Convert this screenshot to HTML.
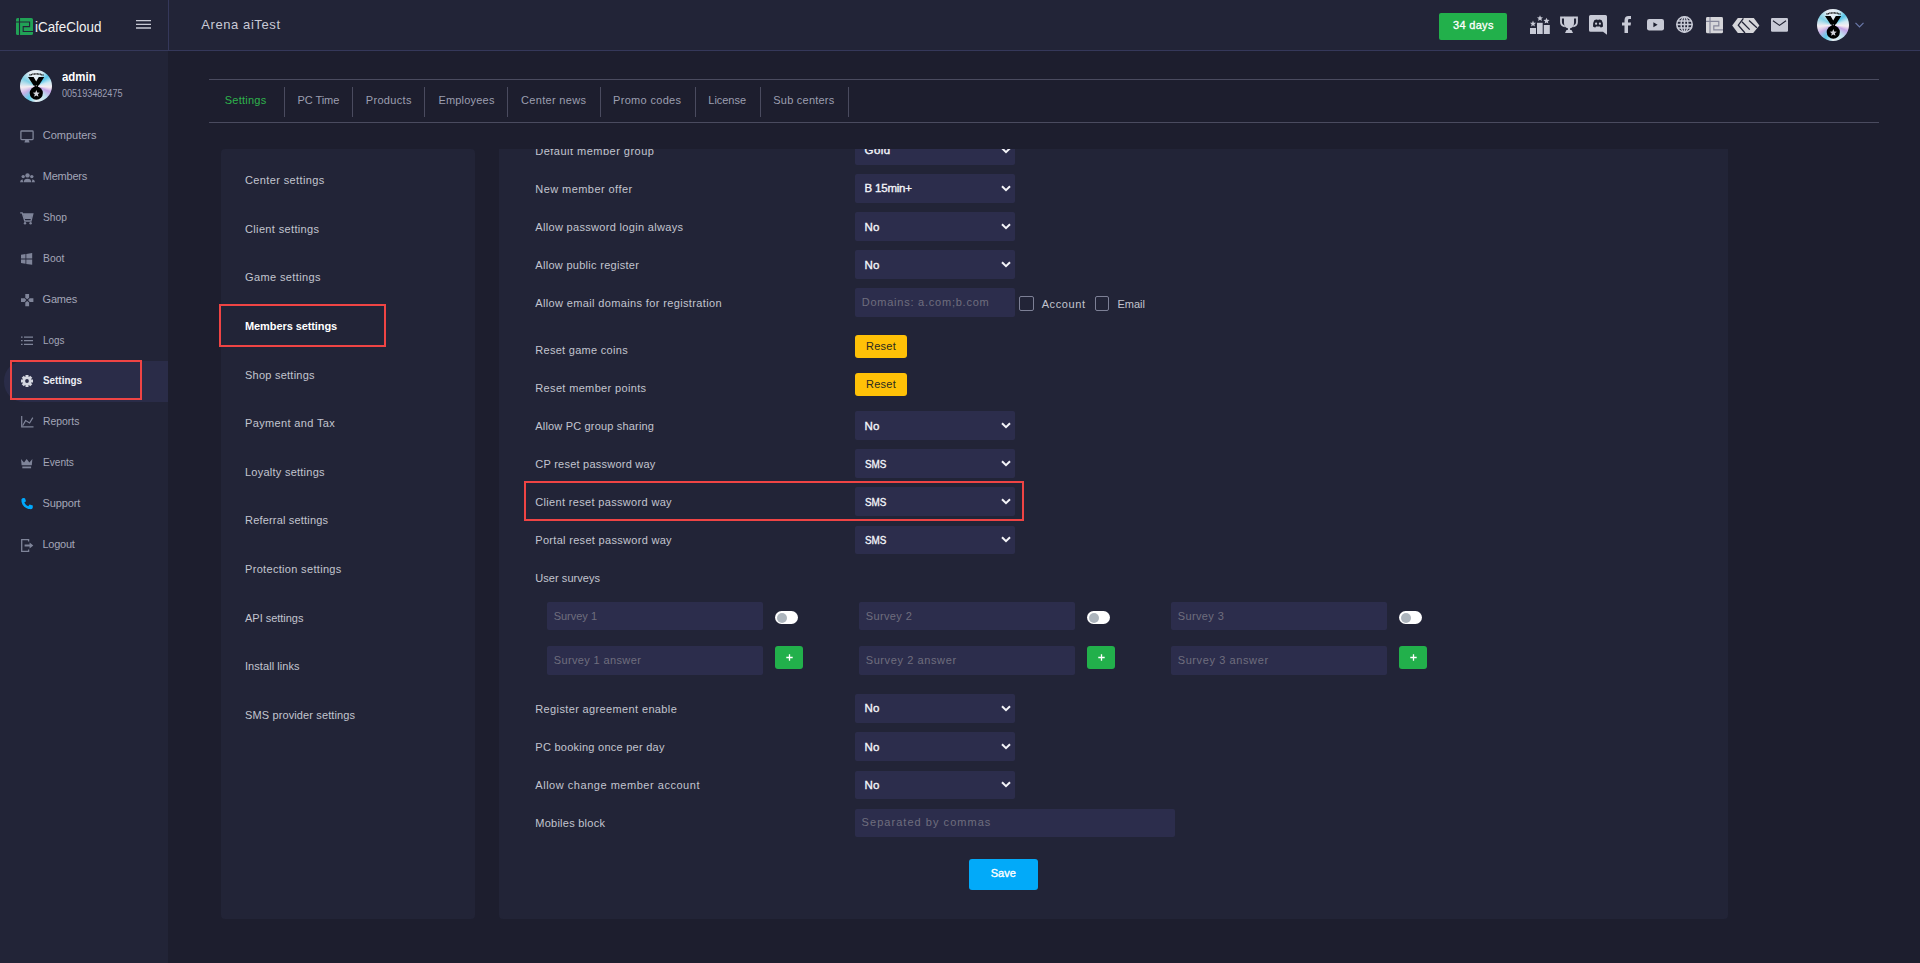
<!DOCTYPE html>
<html><head><meta charset="utf-8"><title>iCafeCloud</title>
<style>
html,body{margin:0;padding:0;}
body{width:1920px;height:963px;overflow:hidden;background:#1d1e2e;position:relative;font-family:"Liberation Sans",sans-serif;}
.t{position:absolute;white-space:nowrap;line-height:1;}
.b{position:absolute;}
svg{position:absolute;overflow:visible;}
#rp{position:absolute;left:499px;top:149px;width:1229px;height:770px;overflow:hidden;background:#222437;border-radius:0 0 4px 4px;}
#rpi{position:absolute;left:-499px;top:-149px;width:1920px;height:963px;}
</style></head><body>
<div class="b" style="left:0px;top:0px;width:1920px;height:50px;background:#222437;border-bottom:1px solid #35385a"></div>
<div class="b" style="left:168px;top:0px;width:1px;height:50px;background:#35385a"></div>
<div class="b" style="left:0px;top:51px;width:168px;height:912px;background:#222437"></div>
<div class="t" style="left:201.20px;top:18.00px;font-size:13px;color:#c9cad6;letter-spacing:0.595px">Arena aiTest</div>
<div class="b" style="left:1439px;top:13px;width:68px;height:27px;background:#22b04b;border-radius:2px"></div>
<div class="t" style="left:1453.00px;top:19.89px;font-size:11px;color:#ffffff;letter-spacing:0.317px;-webkit-text-stroke:0.3px #ffffff">34 days</div>
<div class="t" style="left:35.40px;top:18.88px;font-size:15.5px;color:#f2f2f2;transform:scaleX(0.8653);transform-origin:0 0">iCafeCloud</div>
<div class="b" style="left:4px;top:361px;width:164px;height:41px;background:#2a2c48;border-radius:20px 0 0 20px"></div>
<div class="b" style="left:10px;top:360px;width:132px;height:40px;border:2px solid #ef4444;box-sizing:border-box"></div>
<div class="t" style="left:61.70px;top:70.84px;font-size:12px;color:#ffffff;transform:scaleX(0.9527);transform-origin:0 0;font-weight:bold">admin</div>
<div class="t" style="left:61.70px;top:88.53px;font-size:10px;color:#9c9eb3;transform:scaleX(0.9064);transform-origin:0 0">005193482475</div>
<div class="t" style="left:42.80px;top:129.89px;font-size:11px;color:#a4a6b8;letter-spacing:-0.019px">Computers</div>
<div class="t" style="left:42.80px;top:170.89px;font-size:11px;color:#a4a6b8;letter-spacing:-0.229px">Members</div>
<div class="t" style="left:42.80px;top:211.89px;font-size:11px;color:#a4a6b8;transform:scaleX(0.9282);transform-origin:0 0">Shop</div>
<div class="t" style="left:42.60px;top:252.89px;font-size:11px;color:#a4a6b8;transform:scaleX(0.9414);transform-origin:0 0">Boot</div>
<div class="t" style="left:42.60px;top:293.89px;font-size:11px;color:#a4a6b8;letter-spacing:-0.225px">Games</div>
<div class="t" style="left:42.60px;top:334.89px;font-size:11px;color:#a4a6b8;transform:scaleX(0.9005);transform-origin:0 0">Logs</div>
<div class="t" style="left:42.60px;top:415.89px;font-size:11px;color:#a4a6b8;transform:scaleX(0.9455);transform-origin:0 0">Reports</div>
<div class="t" style="left:42.60px;top:456.89px;font-size:11px;color:#a4a6b8;transform:scaleX(0.9190);transform-origin:0 0">Events</div>
<div class="t" style="left:42.60px;top:497.89px;font-size:11px;color:#a4a6b8;letter-spacing:-0.133px">Support</div>
<div class="t" style="left:42.40px;top:538.89px;font-size:11px;color:#a4a6b8;letter-spacing:-0.245px">Logout</div>
<div class="t" style="left:42.70px;top:374.89px;font-size:11px;color:#eceef5;transform:scaleX(0.8968);transform-origin:0 0;font-weight:bold">Settings</div>
<div class="b" style="left:209px;top:79px;width:1670px;height:1px;background:#4a4b5f"></div>
<div class="b" style="left:209px;top:122px;width:1670px;height:1px;background:#4a4b5f"></div>
<div class="b" style="left:284px;top:87px;width:1px;height:30px;background:#4a4b5f"></div>
<div class="b" style="left:352px;top:87px;width:1px;height:30px;background:#4a4b5f"></div>
<div class="b" style="left:424px;top:87px;width:1px;height:30px;background:#4a4b5f"></div>
<div class="b" style="left:507px;top:87px;width:1px;height:30px;background:#4a4b5f"></div>
<div class="b" style="left:600px;top:87px;width:1px;height:30px;background:#4a4b5f"></div>
<div class="b" style="left:695px;top:87px;width:1px;height:30px;background:#4a4b5f"></div>
<div class="b" style="left:760px;top:87px;width:1px;height:30px;background:#4a4b5f"></div>
<div class="b" style="left:848px;top:87px;width:1px;height:30px;background:#4a4b5f"></div>
<div class="t" style="left:224.70px;top:94.89px;font-size:11px;color:#2eb34c;letter-spacing:0.257px">Settings</div>
<div class="t" style="left:297.50px;top:94.89px;font-size:11px;color:#9c9eb0;letter-spacing:-0.071px">PC Time</div>
<div class="t" style="left:365.80px;top:94.89px;font-size:11px;color:#9c9eb0;letter-spacing:0.318px">Products</div>
<div class="t" style="left:438.40px;top:94.89px;font-size:11px;color:#9c9eb0;letter-spacing:0.203px">Employees</div>
<div class="t" style="left:521.00px;top:94.89px;font-size:11px;color:#9c9eb0;letter-spacing:0.325px">Center news</div>
<div class="t" style="left:613.00px;top:94.89px;font-size:11px;color:#9c9eb0;letter-spacing:0.325px">Promo codes</div>
<div class="t" style="left:708.30px;top:94.89px;font-size:11px;color:#9c9eb0;letter-spacing:-0.029px">License</div>
<div class="t" style="left:773.30px;top:94.89px;font-size:11px;color:#9c9eb0;letter-spacing:0.225px">Sub centers</div>
<div class="b" style="left:221px;top:149px;width:254px;height:770px;background:#222437;border-radius:4px"></div>
<div class="t" style="left:245.00px;top:174.89px;font-size:11px;color:#c3c4cf;letter-spacing:0.379px">Center settings</div>
<div class="t" style="left:245.00px;top:223.89px;font-size:11px;color:#c3c4cf;letter-spacing:0.354px">Client settings</div>
<div class="t" style="left:245.00px;top:271.89px;font-size:11px;color:#c3c4cf;letter-spacing:0.385px">Game settings</div>
<div class="t" style="left:245.00px;top:320.89px;font-size:11px;color:#ffffff;letter-spacing:-0.087px;font-weight:bold">Members settings</div>
<div class="t" style="left:245.00px;top:369.89px;font-size:11px;color:#c3c4cf;letter-spacing:0.240px">Shop settings</div>
<div class="t" style="left:245.00px;top:417.89px;font-size:11px;color:#c3c4cf;letter-spacing:0.361px">Payment and Tax</div>
<div class="t" style="left:245.00px;top:466.89px;font-size:11px;color:#c3c4cf;letter-spacing:0.248px">Loyalty settings</div>
<div class="t" style="left:245.00px;top:514.89px;font-size:11px;color:#c3c4cf;letter-spacing:0.186px">Referral settings</div>
<div class="t" style="left:245.00px;top:563.89px;font-size:11px;color:#c3c4cf;letter-spacing:0.322px">Protection settings</div>
<div class="t" style="left:245.00px;top:612.89px;font-size:11px;color:#c3c4cf;letter-spacing:-0.023px">API settings</div>
<div class="t" style="left:245.00px;top:660.89px;font-size:11px;color:#c3c4cf;letter-spacing:0.062px">Install links</div>
<div class="t" style="left:245.00px;top:709.89px;font-size:11px;color:#c3c4cf;letter-spacing:0.124px">SMS provider settings</div>
<div class="b" style="left:219px;top:304px;width:167px;height:43px;border:2px solid #ef4444;box-sizing:border-box"></div>
<div id="rp"><div id="rpi">
<div class="t" style="left:535.30px;top:145.69px;font-size:11px;color:#c3c4cf;letter-spacing:0.484px">Default member group</div>
<div class="t" style="left:535.30px;top:183.99px;font-size:11px;color:#c3c4cf;letter-spacing:0.437px">New member offer</div>
<div class="t" style="left:535.30px;top:221.89px;font-size:11px;color:#c3c4cf;letter-spacing:0.320px">Allow password login always</div>
<div class="t" style="left:535.30px;top:259.69px;font-size:11px;color:#c3c4cf;letter-spacing:0.291px">Allow public register</div>
<div class="t" style="left:535.30px;top:297.59px;font-size:11px;color:#c3c4cf;letter-spacing:0.362px">Allow email domains for registration</div>
<div class="t" style="left:535.30px;top:344.99px;font-size:11px;color:#c3c4cf;letter-spacing:0.287px">Reset game coins</div>
<div class="t" style="left:535.30px;top:382.69px;font-size:11px;color:#c3c4cf;letter-spacing:0.344px">Reset member points</div>
<div class="t" style="left:535.30px;top:421.09px;font-size:11px;color:#c3c4cf;letter-spacing:0.176px">Allow PC group sharing</div>
<div class="t" style="left:535.30px;top:458.89px;font-size:11px;color:#c3c4cf;letter-spacing:0.236px">CP reset password way</div>
<div class="t" style="left:535.30px;top:496.89px;font-size:11px;color:#c3c4cf;letter-spacing:0.330px">Client reset password way</div>
<div class="t" style="left:535.30px;top:534.89px;font-size:11px;color:#c3c4cf;letter-spacing:0.304px">Portal reset password way</div>
<div class="t" style="left:535.30px;top:572.89px;font-size:11px;color:#c3c4cf;letter-spacing:0.052px">User surveys</div>
<div class="t" style="left:535.30px;top:704.19px;font-size:11px;color:#c3c4cf;letter-spacing:0.365px">Register agreement enable</div>
<div class="t" style="left:535.30px;top:741.99px;font-size:11px;color:#c3c4cf;letter-spacing:0.255px">PC booking once per day</div>
<div class="t" style="left:535.30px;top:779.89px;font-size:11px;color:#c3c4cf;letter-spacing:0.528px">Allow change member account</div>
<div class="t" style="left:535.30px;top:817.69px;font-size:11px;color:#c3c4cf;letter-spacing:0.246px">Mobiles block</div>
<div class="b" style="left:855px;top:136px;width:160px;height:28.8px;background:#2c2d4c;border-radius:2px"></div>
<svg class="chev" width="10" height="7" viewBox="0 0 10 7" style="left:1001px;top:146.8px"><path d="M1 1.2 L5 5.2 L9 1.2" fill="none" stroke="#f4f4f8" stroke-width="2"/></svg>
<div class="t" style="left:864.60px;top:145.47px;font-size:11.5px;color:#f4f5fa;letter-spacing:0.450px;-webkit-text-stroke:0.35px #f4f5fa">Gold</div>
<div class="b" style="left:855px;top:174px;width:160px;height:28.8px;background:#2c2d4c;border-radius:2px"></div>
<svg class="chev" width="10" height="7" viewBox="0 0 10 7" style="left:1001px;top:184.8px"><path d="M1 1.2 L5 5.2 L9 1.2" fill="none" stroke="#f4f4f8" stroke-width="2"/></svg>
<div class="t" style="left:864.60px;top:183.47px;font-size:11.5px;color:#f4f5fa;letter-spacing:-0.211px;-webkit-text-stroke:0.35px #f4f5fa">B 15min+</div>
<div class="b" style="left:855px;top:212.2px;width:160px;height:28.8px;background:#2c2d4c;border-radius:2px"></div>
<svg class="chev" width="10" height="7" viewBox="0 0 10 7" style="left:1001px;top:223.0px"><path d="M1 1.2 L5 5.2 L9 1.2" fill="none" stroke="#f4f4f8" stroke-width="2"/></svg>
<div class="t" style="left:864.60px;top:221.67px;font-size:11.5px;color:#f4f5fa;letter-spacing:0.050px;-webkit-text-stroke:0.35px #f4f5fa">No</div>
<div class="b" style="left:855px;top:250.2px;width:160px;height:28.8px;background:#2c2d4c;border-radius:2px"></div>
<svg class="chev" width="10" height="7" viewBox="0 0 10 7" style="left:1001px;top:261.0px"><path d="M1 1.2 L5 5.2 L9 1.2" fill="none" stroke="#f4f4f8" stroke-width="2"/></svg>
<div class="t" style="left:864.60px;top:259.67px;font-size:11.5px;color:#f4f5fa;letter-spacing:0.050px;-webkit-text-stroke:0.35px #f4f5fa">No</div>
<div class="b" style="left:855px;top:411.2px;width:160px;height:28.8px;background:#2c2d4c;border-radius:2px"></div>
<svg class="chev" width="10" height="7" viewBox="0 0 10 7" style="left:1001px;top:422.0px"><path d="M1 1.2 L5 5.2 L9 1.2" fill="none" stroke="#f4f4f8" stroke-width="2"/></svg>
<div class="t" style="left:864.60px;top:420.67px;font-size:11.5px;color:#f4f5fa;letter-spacing:0.050px;-webkit-text-stroke:0.35px #f4f5fa">No</div>
<div class="b" style="left:855px;top:449.2px;width:160px;height:28.8px;background:#2c2d4c;border-radius:2px"></div>
<svg class="chev" width="10" height="7" viewBox="0 0 10 7" style="left:1001px;top:460.0px"><path d="M1 1.2 L5 5.2 L9 1.2" fill="none" stroke="#f4f4f8" stroke-width="2"/></svg>
<div class="t" style="left:864.60px;top:458.67px;font-size:11.5px;color:#f4f5fa;transform:scaleX(0.8603);transform-origin:0 0;-webkit-text-stroke:0.35px #f4f5fa">SMS</div>
<div class="b" style="left:855px;top:487.4px;width:160px;height:28.8px;background:#2c2d4c;border-radius:2px"></div>
<svg class="chev" width="10" height="7" viewBox="0 0 10 7" style="left:1001px;top:498.2px"><path d="M1 1.2 L5 5.2 L9 1.2" fill="none" stroke="#f4f4f8" stroke-width="2"/></svg>
<div class="t" style="left:864.60px;top:496.87px;font-size:11.5px;color:#f4f5fa;transform:scaleX(0.8603);transform-origin:0 0;-webkit-text-stroke:0.35px #f4f5fa">SMS</div>
<div class="b" style="left:855px;top:525.6px;width:160px;height:28.8px;background:#2c2d4c;border-radius:2px"></div>
<svg class="chev" width="10" height="7" viewBox="0 0 10 7" style="left:1001px;top:536.4px"><path d="M1 1.2 L5 5.2 L9 1.2" fill="none" stroke="#f4f4f8" stroke-width="2"/></svg>
<div class="t" style="left:864.60px;top:535.07px;font-size:11.5px;color:#f4f5fa;transform:scaleX(0.8603);transform-origin:0 0;-webkit-text-stroke:0.35px #f4f5fa">SMS</div>
<div class="b" style="left:855px;top:694px;width:160px;height:28.8px;background:#2c2d4c;border-radius:2px"></div>
<svg class="chev" width="10" height="7" viewBox="0 0 10 7" style="left:1001px;top:704.8px"><path d="M1 1.2 L5 5.2 L9 1.2" fill="none" stroke="#f4f4f8" stroke-width="2"/></svg>
<div class="t" style="left:864.60px;top:703.47px;font-size:11.5px;color:#f4f5fa;letter-spacing:0.050px;-webkit-text-stroke:0.35px #f4f5fa">No</div>
<div class="b" style="left:855px;top:732.2px;width:160px;height:28.8px;background:#2c2d4c;border-radius:2px"></div>
<svg class="chev" width="10" height="7" viewBox="0 0 10 7" style="left:1001px;top:743.0px"><path d="M1 1.2 L5 5.2 L9 1.2" fill="none" stroke="#f4f4f8" stroke-width="2"/></svg>
<div class="t" style="left:864.60px;top:741.67px;font-size:11.5px;color:#f4f5fa;letter-spacing:0.050px;-webkit-text-stroke:0.35px #f4f5fa">No</div>
<div class="b" style="left:855px;top:770.6px;width:160px;height:28.8px;background:#2c2d4c;border-radius:2px"></div>
<svg class="chev" width="10" height="7" viewBox="0 0 10 7" style="left:1001px;top:781.4px"><path d="M1 1.2 L5 5.2 L9 1.2" fill="none" stroke="#f4f4f8" stroke-width="2"/></svg>
<div class="t" style="left:864.60px;top:780.07px;font-size:11.5px;color:#f4f5fa;letter-spacing:0.050px;-webkit-text-stroke:0.35px #f4f5fa">No</div>
<div class="b" style="left:855px;top:288px;width:160px;height:29px;background:#2c2d4c;border-radius:2px"></div>
<div class="t" style="left:861.70px;top:296.89px;font-size:11px;color:#6f6e7e;letter-spacing:0.768px">Domains: a.com;b.com</div>
<div class="b" style="left:1019px;top:296px;width:15px;height:15px;border:1px solid #7d8096;border-radius:2px;box-sizing:border-box"></div>
<div class="t" style="left:1041.70px;top:298.99px;font-size:11px;color:#c3c4cf;letter-spacing:0.592px">Account</div>
<div class="b" style="left:1095px;top:296px;width:14px;height:15px;border:1px solid #7d8096;border-radius:2px;box-sizing:border-box"></div>
<div class="t" style="left:1117.50px;top:298.99px;font-size:11px;color:#c3c4cf;letter-spacing:0.000px">Email</div>
<div class="b" style="left:855px;top:335px;width:52px;height:23px;background:#ffc107;border-radius:3px"></div>
<div class="t" style="left:866.00px;top:340.69px;font-size:11px;color:#2a2a20;letter-spacing:0.262px">Reset</div>
<div class="b" style="left:855px;top:373px;width:52px;height:23px;background:#ffc107;border-radius:3px"></div>
<div class="t" style="left:866.00px;top:378.69px;font-size:11px;color:#2a2a20;letter-spacing:0.262px">Reset</div>
<div class="b" style="left:547px;top:602px;width:216px;height:28px;background:#2c2d4c;border-radius:2px"></div>
<div class="b" style="left:547px;top:646px;width:216px;height:29px;background:#2c2d4c;border-radius:2px"></div>
<div class="t" style="left:553.70px;top:610.99px;font-size:11px;color:#6f6e7e;letter-spacing:-0.011px">Survey 1</div>
<div class="t" style="left:553.70px;top:654.89px;font-size:11px;color:#6f6e7e;letter-spacing:0.373px">Survey 1 answer</div>
<div class="b" style="left:775px;top:611px;width:23px;height:13px;background:#ffffff;border-radius:7px"></div>
<div class="b" style="left:776.5px;top:612.5px;width:10px;height:10px;background:#adb5bd;border-radius:5px"></div>
<div class="b" style="left:775px;top:646px;width:28px;height:23px;background:#22b04b;border-radius:3px"></div>
<svg class="chev" width="7" height="7" viewBox="0 0 7 7" style="left:785.8px;top:654px"><path d="M3.5 0.3V6.7M0.3 3.5H6.7" stroke="#ffffff" stroke-width="1.3"/></svg>
<div class="b" style="left:859px;top:602px;width:216px;height:28px;background:#2c2d4c;border-radius:2px"></div>
<div class="b" style="left:859px;top:646px;width:216px;height:29px;background:#2c2d4c;border-radius:2px"></div>
<div class="t" style="left:865.70px;top:610.99px;font-size:11px;color:#6f6e7e;letter-spacing:0.389px">Survey 2</div>
<div class="t" style="left:865.70px;top:654.89px;font-size:11px;color:#6f6e7e;letter-spacing:0.602px">Survey 2 answer</div>
<div class="b" style="left:1087px;top:611px;width:23px;height:13px;background:#ffffff;border-radius:7px"></div>
<div class="b" style="left:1088.5px;top:612.5px;width:10px;height:10px;background:#adb5bd;border-radius:5px"></div>
<div class="b" style="left:1087px;top:646px;width:28px;height:23px;background:#22b04b;border-radius:3px"></div>
<svg class="chev" width="7" height="7" viewBox="0 0 7 7" style="left:1097.8px;top:654px"><path d="M3.5 0.3V6.7M0.3 3.5H6.7" stroke="#ffffff" stroke-width="1.3"/></svg>
<div class="b" style="left:1171px;top:602px;width:216px;height:28px;background:#2c2d4c;border-radius:2px"></div>
<div class="b" style="left:1171px;top:646px;width:216px;height:29px;background:#2c2d4c;border-radius:2px"></div>
<div class="t" style="left:1177.70px;top:610.99px;font-size:11px;color:#6f6e7e;letter-spacing:0.389px">Survey 3</div>
<div class="t" style="left:1177.70px;top:654.89px;font-size:11px;color:#6f6e7e;letter-spacing:0.602px">Survey 3 answer</div>
<div class="b" style="left:1399px;top:611px;width:23px;height:13px;background:#ffffff;border-radius:7px"></div>
<div class="b" style="left:1400.5px;top:612.5px;width:10px;height:10px;background:#adb5bd;border-radius:5px"></div>
<div class="b" style="left:1399px;top:646px;width:28px;height:23px;background:#22b04b;border-radius:3px"></div>
<svg class="chev" width="7" height="7" viewBox="0 0 7 7" style="left:1409.8px;top:654px"><path d="M3.5 0.3V6.7M0.3 3.5H6.7" stroke="#ffffff" stroke-width="1.3"/></svg>
<div class="b" style="left:855px;top:809px;width:320px;height:28px;background:#2c2d4c;border-radius:2px"></div>
<div class="t" style="left:861.60px;top:816.89px;font-size:11px;color:#6f6e7e;letter-spacing:1.039px">Separated by commas</div>
<div class="b" style="left:969px;top:859px;width:69px;height:31px;background:#02aaf9;border-radius:3px"></div>
<div class="t" style="left:990.70px;top:867.89px;font-size:11px;color:#ffffff;letter-spacing:0.025px;-webkit-text-stroke:0.35px #ffffff">Save</div>
<div class="b" style="left:524px;top:481px;width:500px;height:40px;border:2px solid #ef4444;box-sizing:border-box"></div>
</div></div>
<svg style="left:16px;top:18px" width="17" height="17" viewBox="0 0 17 17"><rect x="0" y="0" width="17" height="17" rx="1.6" fill="#21a256"/><path d="M3.5 0V17" stroke="#222437" stroke-width="1.1"/><path d="M0 4H13.6V8.6H7.2V13.5H17" fill="none" stroke="#222437" stroke-width="1.1"/></svg>
<svg style="left:136px;top:19px" width="15" height="11" viewBox="0 0 15 11"><path d="M0 1.6H15M0 5.3H15M0 9H15" stroke="#c8c9d4" stroke-width="1.3"/></svg>
<div class="b" style="left:20px;top:70px;width:32px;height:32px;border-radius:50%;background:conic-gradient(from 0deg,#e6edf3 0deg,#d6ecf5 25deg,#55c6ea 50deg,#cfe9f3 75deg,#f6eef2 95deg,#c3a3e6 112deg,#bfe3f0 140deg,#e9eef3 180deg,#5ecbe9 210deg,#c7b0e6 240deg,#f5eef2 265deg,#7fd0e6 300deg,#e3ecf3 335deg,#e6edf3 360deg)"></div><svg style="left:20px;top:70px" width="32" height="32" viewBox="0 0 32 32"><path d="M8 7H13.6L16.2 11.4L18.8 7H24.3L18.8 15.5H13.6Z" fill="#000"/><rect x="14.6" y="14.5" width="3.4" height="3.8" fill="#000"/><circle cx="16.3" cy="15.8" r="0.6" fill="#ccc"/><circle cx="16.3" cy="23.1" r="6.6" fill="#000"/><path d="M16.30 20.10 L17.24 22.51 L19.82 22.66 L17.82 24.29 L18.47 26.79 L16.30 25.40 L14.13 26.79 L14.78 24.29 L12.78 22.66 L15.36 22.51Z" fill="#d4d4dc"/><path d="M9.5 5.2Q16.3 2.6 23.5 5.2" stroke="#111" stroke-width="1.6" fill="none" stroke-dasharray="1 0.5"/></svg>
<div class="b" style="left:1817px;top:9px;width:32px;height:32px;border-radius:50%;background:conic-gradient(from 0deg,#e6edf3 0deg,#d6ecf5 25deg,#55c6ea 50deg,#cfe9f3 75deg,#f6eef2 95deg,#c3a3e6 112deg,#bfe3f0 140deg,#e9eef3 180deg,#5ecbe9 210deg,#c7b0e6 240deg,#f5eef2 265deg,#7fd0e6 300deg,#e3ecf3 335deg,#e6edf3 360deg)"></div><svg style="left:1817px;top:9px" width="32" height="32" viewBox="0 0 32 32"><path d="M8 7H13.6L16.2 11.4L18.8 7H24.3L18.8 15.5H13.6Z" fill="#000"/><rect x="14.6" y="14.5" width="3.4" height="3.8" fill="#000"/><circle cx="16.3" cy="15.8" r="0.6" fill="#ccc"/><circle cx="16.3" cy="23.1" r="6.6" fill="#000"/><path d="M16.30 20.10 L17.24 22.51 L19.82 22.66 L17.82 24.29 L18.47 26.79 L16.30 25.40 L14.13 26.79 L14.78 24.29 L12.78 22.66 L15.36 22.51Z" fill="#d4d4dc"/><path d="M9.5 5.2Q16.3 2.6 23.5 5.2" stroke="#111" stroke-width="1.6" fill="none" stroke-dasharray="1 0.5"/></svg>
<svg style="left:1855px;top:22px" width="9" height="6" viewBox="0 0 9 6"><path d="M0.5 0.8L4.5 4.8L8.5 0.8" fill="none" stroke="#6a78aa" stroke-width="1.2"/></svg>
<svg style="left:1529px;top:14px" width="22" height="21" viewBox="0 0 22 21"><rect x="1" y="14" width="6" height="6" fill="#c8cad6"/><rect x="8" y="8.8" width="5.7" height="11.2" fill="#c8cad6"/><rect x="14.8" y="11" width="6" height="9" fill="#c8cad6"/><path d="M4.00 6.60 L4.85 8.64 L7.04 8.81 L5.37 10.24 L5.88 12.39 L4.00 11.24 L2.12 12.39 L2.63 10.24 L0.96 8.81 L3.15 8.64Z" fill="#c8cad6"/><path d="M11.00 1.20 L11.85 3.24 L14.04 3.41 L12.37 4.84 L12.88 6.99 L11.00 5.84 L9.12 6.99 L9.63 4.84 L7.96 3.41 L10.15 3.24Z" fill="#c8cad6"/><path d="M17.50 3.80 L18.35 5.84 L20.54 6.01 L18.87 7.44 L19.38 9.59 L17.50 8.44 L15.62 9.59 L16.13 7.44 L14.46 6.01 L16.65 5.84Z" fill="#c8cad6"/></svg>
<svg style="left:1560px;top:16px" width="18" height="17" viewBox="0 0 18 17"><path d="M4 0.5H14V7Q14 12 9 12.5Q4 12 4 7Z" fill="#c8cad6"/><path d="M4.2 1.5H1V6Q1 9.5 4.8 10.5M13.8 1.5H17V6Q17 9.5 13.2 10.5" fill="none" stroke="#c8cad6" stroke-width="1.8"/><path d="M8 12H10L10.2 14H7.8Z" fill="#c8cad6"/><path d="M5 17L6.5 14H11.5L13 17Z" fill="#c8cad6"/></svg>
<svg style="left:1589px;top:15px" width="18" height="20" viewBox="0 0 18 20"><path d="M1.5 0H16.5Q18 0 18 1.5V19.7L14 16.8H1.5Q0 16.8 0 15.3V1.5Q0 0 1.5 0Z" fill="#c8cad6"/><path d="M4 11.5Q3.6 8 5.3 5.2Q7 4.2 8.2 4.5L9 5.3L9.8 4.5Q11 4.2 12.7 5.2Q14.4 8 14 11.5Q12.8 12.5 11.6 12.6L11 11.6H7L6.4 12.6Q5.2 12.5 4 11.5Z" fill="#1e2030"/><circle cx="7.1" cy="8.7" r="1.1" fill="#c8cad6"/><circle cx="10.9" cy="8.7" r="1.1" fill="#c8cad6"/></svg>
<svg style="left:1622px;top:16px" width="9" height="17" viewBox="0 0 9 17"><path d="M2.5 17V9.5H0V6.5H2.5V4.3Q2.5 0 6.6 0H9V3H7.2Q6 3 6 4.4V6.5H9L8.6 9.5H6V17Z" fill="#c8cad6"/></svg>
<svg style="left:1647px;top:18.8px" width="17" height="11.4" viewBox="0 0 17 11.4"><rect x="0" y="0" width="17" height="11.4" rx="2.2" fill="#c8cad6"/><path d="M6.4 3.2L10.6 5.7L6.4 8.2Z" fill="#1e2030"/></svg>
<svg style="left:1676px;top:16px" width="17" height="17" viewBox="0 0 17 17"><circle cx="8.5" cy="8.5" r="7.7" fill="none" stroke="#c8cad6" stroke-width="1.6"/><ellipse cx="8.5" cy="8.5" rx="3.4" ry="7.7" fill="none" stroke="#c8cad6" stroke-width="1.5"/><path d="M8.5 0.8V16.2M0.8 8.5H16.2M1.8 5.1H15.2M1.8 11.9H15.2" stroke="#c8cad6" stroke-width="1.5"/></svg>
<svg style="left:1705.5px;top:16.6px" width="17" height="16.2" viewBox="0 0 17 16.2"><rect x="0" y="0" width="17" height="16.2" rx="1.5" fill="#d6d6da"/><path d="M4 0V16.2" stroke="#85869a" stroke-width="1.2"/><path d="M0 4.3H12.8V8.8H7.8V12.8H17" fill="none" stroke="#85869a" stroke-width="1.2"/></svg>
<svg style="left:1732px;top:17.8px" width="28" height="15" viewBox="0 0 28 15"><path d="M0.2 7.5L5.8 0H21.8L27.4 7.5L21.2 15H5.8Z" fill="#d6d6da"/><path d="M11.4 0.3L6.3 7.2L13 15" fill="none" stroke="#222437" stroke-width="1.3"/><path d="M9.9 3.8L17.7 11.6M17 2.5L24.9 9.7" fill="none" stroke="#222437" stroke-width="1.3"/></svg>
<svg style="left:1771px;top:17.6px" width="17" height="13.8" viewBox="0 0 17 13.8"><rect x="0" y="0" width="17" height="13.8" rx="1.2" fill="#c8cad6"/><path d="M2 2.8L8.5 7.4L15 2.8" fill="none" stroke="#1e2030" stroke-width="1.1"/></svg>
<svg style="left:20px;top:129.5px" width="14" height="13" viewBox="0 0 14 13"><rect x="0.9" y="1" width="12.2" height="8.6" rx="0.8" fill="none" stroke="#7f8499" stroke-width="1.3"/><path d="M5.3 10H8.7L9.6 12.4H4.4Z" fill="#7f8499"/></svg>
<svg style="left:19.5px;top:172.5px" width="15" height="10" viewBox="0 0 15 10"><circle cx="7.5" cy="2.4" r="2.2" fill="#7f8499"/><circle cx="3.2" cy="3.6" r="1.7" fill="#7f8499"/><circle cx="11.8" cy="3.6" r="1.7" fill="#7f8499"/><path d="M3.6 9.2Q4 5.8 7.5 5.8Q11 5.8 11.4 9.2Z" fill="#7f8499"/><path d="M0 9.2Q0.2 6.8 2.5 6.3L3.2 9.2Z M15 9.2Q14.8 6.8 12.5 6.3L11.8 9.2Z" fill="#7f8499"/></svg>
<svg style="left:20px;top:211.5px" width="13" height="13" viewBox="0 0 13 13"><path d="M0.2 0.8H2.2L4.8 9H11L12.8 2H3" fill="none" stroke="#7f8499" stroke-width="1.3"/><path d="M3 2H12.8L11 7H4.4Z" fill="#7f8499"/><circle cx="5" cy="11.3" r="1.2" fill="#7f8499"/><circle cx="10.6" cy="11.3" r="1.2" fill="#7f8499"/></svg>
<svg style="left:21px;top:253px" width="11.2" height="11.8" viewBox="0 0 11.2 11.8"><path d="M0 1.8L4.5 1.1V5.6H0Z M5.3 1L11.2 0V5.6H5.3Z M0 6.4H4.5V10.8L0 10.1Z M5.3 6.4H11.2V11.8L5.3 10.9Z" fill="#7f8499"/></svg>
<svg style="left:20.8px;top:293.8px" width="12.4" height="12.2" viewBox="0 0 12.4 12.2"><path d="M4.3 0H8.1V3.7L6.2 5.3L4.3 3.7Z M4.3 12.2H8.1V8.5L6.2 6.9L4.3 8.5Z M0 4.2H3.7L5.3 6.1L3.7 8H0Z M12.4 4.2H8.7L7.1 6.1L8.7 8H12.4Z" fill="#7f8499"/></svg>
<svg style="left:21px;top:336px" width="12" height="9.5" viewBox="0 0 12 9.5"><path d="M0 1.1H1.6M0 4.7H1.6M0 8.3H1.6M3 1.1H12M3 4.7H12M3 8.3H12" stroke="#7f8499" stroke-width="1.3"/></svg>
<svg style="left:21px;top:374.8px" width="12" height="12" viewBox="0 0 12 12"><path d="M4.6 0H7.4L7.7 1.7L8.9 2.3L10.3 1.3L12.3 3.3L11.3 4.7L11.9 5.9L13.6 6.2" fill="none"/><g transform="translate(6 6)" fill="#d4d6e0"><circle r="4.4"/><rect x="-1.5" y="-6" width="3" height="12"/><rect x="-6" y="-1.5" width="12" height="3"/><rect x="-1.5" y="-6" width="3" height="12" transform="rotate(45)"/><rect x="-6" y="-1.5" width="12" height="3" transform="rotate(45)"/></g><circle cx="6" cy="6" r="1.9" fill="#2a2c48"/></svg>
<svg style="left:21px;top:415.5px" width="12.5" height="11.5" viewBox="0 0 12.5 11.5"><path d="M0.7 0V10.8H12.5" fill="none" stroke="#7f8499" stroke-width="1.2"/><path d="M1.6 9.8L4.6 4.6L8.6 7L11.8 1.6" fill="none" stroke="#7f8499" stroke-width="1.2"/></svg>
<svg style="left:21.3px;top:458.5px" width="11.4" height="9.8" viewBox="0 0 11.4 9.8"><path d="M0 0L3 3.5L5.7 0L8.4 3.5L11.4 0L10.8 6.3H0.6Z" fill="#7f8499"/><rect x="1.3" y="7.5" width="8.8" height="1.8" fill="#7f8499"/></svg>
<svg style="left:20.8px;top:498px" width="12" height="11.2" viewBox="0 0 12 11.2"><path d="M0.4 1.6Q0.8 0.2 2.2 0.1L4 0.2L5 3.3L3.3 4.5Q4.6 7.4 7.2 8.2L8.6 6.4L11.8 7.5V9.6Q11.5 11.1 10 11.2Q4.6 11 1.6 6.7Q0.1 4.1 0.4 1.6Z" fill="#00a8fc"/></svg>
<svg style="left:21px;top:538.5px" width="12.5" height="13" viewBox="0 0 12.5 13"><path d="M7.6 2.6V0.7H0.7V12.3H7.6V10.4" fill="none" stroke="#7f8499" stroke-width="1.3"/><path d="M3.6 5.6H8.6V3.4L12.3 6.5L8.6 9.6V7.4H3.6Z" fill="#7f8499"/></svg>
</body></html>
